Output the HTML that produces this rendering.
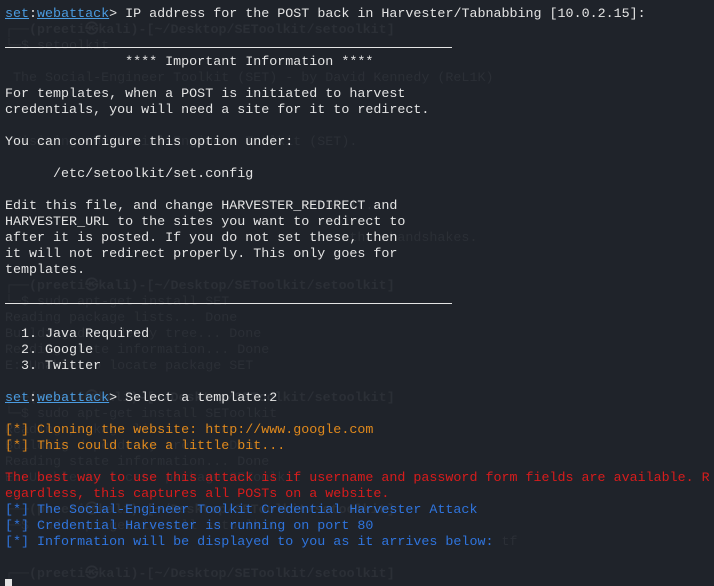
<!DOCTYPE html>
<html><head><meta charset="utf-8"><style>
html,body{margin:0;padding:0;width:714px;height:586px;background:#1f232a;overflow:hidden}
pre{margin:0;position:absolute;left:5px;top:7px;font-family:"Liberation Mono","DejaVu Sans Mono",monospace;font-size:13.35px;line-height:16px;white-space:pre}
#g{color:#2b2f36}
#g b{font-weight:bold}
#f{color:#e4e4e4}
.u{color:#4a9be0;text-decoration:underline}
.o{color:#e0891c}
.r{color:#d81c1c}
.b{color:#2f74dd}
.rule{position:absolute;left:5px;width:447px;height:1px;background:#e4e4e4}
.cur{position:absolute;left:5px;top:579px;width:7px;height:7px;background:#e4e4e4}
</style></head><body>
<pre id="g">

<b>┌──(preeti㉿kali)-[~/Desktop/SEToolkit/setoolkit]</b>
└─$ setoolkit

 The Social-Engineer Toolkit (SET) - by David Kennedy (ReL1K)



 Visiting the Social-Engineer Toolkit (SET).



                                      Toolkit.

                                       ore than handshakes.


<b>┌──(preeti㉿kali)-[~/Desktop/SEToolkit/setoolkit]</b>
└─$ sudo apt-get install SET
Reading package lists... Done
Building dependency tree... Done
Reading state information... Done
E: Unable to locate package SET

<b>┌──(preeti㉿kali)-[~/Desktop/SEToolkit/setoolkit]</b>
└─$ sudo apt-get install SEToolkit
Reading package lists... Done
Building dependency tree... Done
Reading state information... Done
E: Unable to locate package SEToolkit

<b>┌──(preeti㉿kali)-[~/Desktop/SEToolkit/setoolkit]</b>
└─$ sudo apt-get install setoolkit
                                                              tf

<b>┌──(preeti㉿kali)-[~/Desktop/SEToolkit/setoolkit]</b>
</pre>
<pre id="f"><span class="u">set</span>:<span class="u">webattack</span>&gt; IP address for the POST back in Harvester/Tabnabbing [10.0.2.15]:


               **** Important Information ****

For templates, when a POST is initiated to harvest
credentials, you will need a site for it to redirect.

You can configure this option under:

      /etc/setoolkit/set.config

Edit this file, and change HARVESTER_REDIRECT and
HARVESTER_URL to the sites you want to redirect to
after it is posted. If you do not set these, then
it will not redirect properly. This only goes for
templates.



  1. Java Required
  2. Google
  3. Twitter

<span class="u">set</span>:<span class="u">webattack</span>&gt; Select a template:2

<span class="o">[*] Cloning the website: http://www.google.com</span>
<span class="o">[*] This could take a little bit...</span>

<span class="r">The best way to use this attack is if username and password form fields are available. R</span>
<span class="r">egardless, this captures all POSTs on a website.</span>
<span class="b">[*] The Social-Engineer Toolkit Credential Harvester Attack</span>
<span class="b">[*] Credential Harvester is running on port 80</span>
<span class="b">[*] Information will be displayed to you as it arrives below:</span>
</pre>
<div class="rule" style="top:47px"></div>
<div class="rule" style="top:303px"></div>
<div class="cur"></div>
</body></html>
